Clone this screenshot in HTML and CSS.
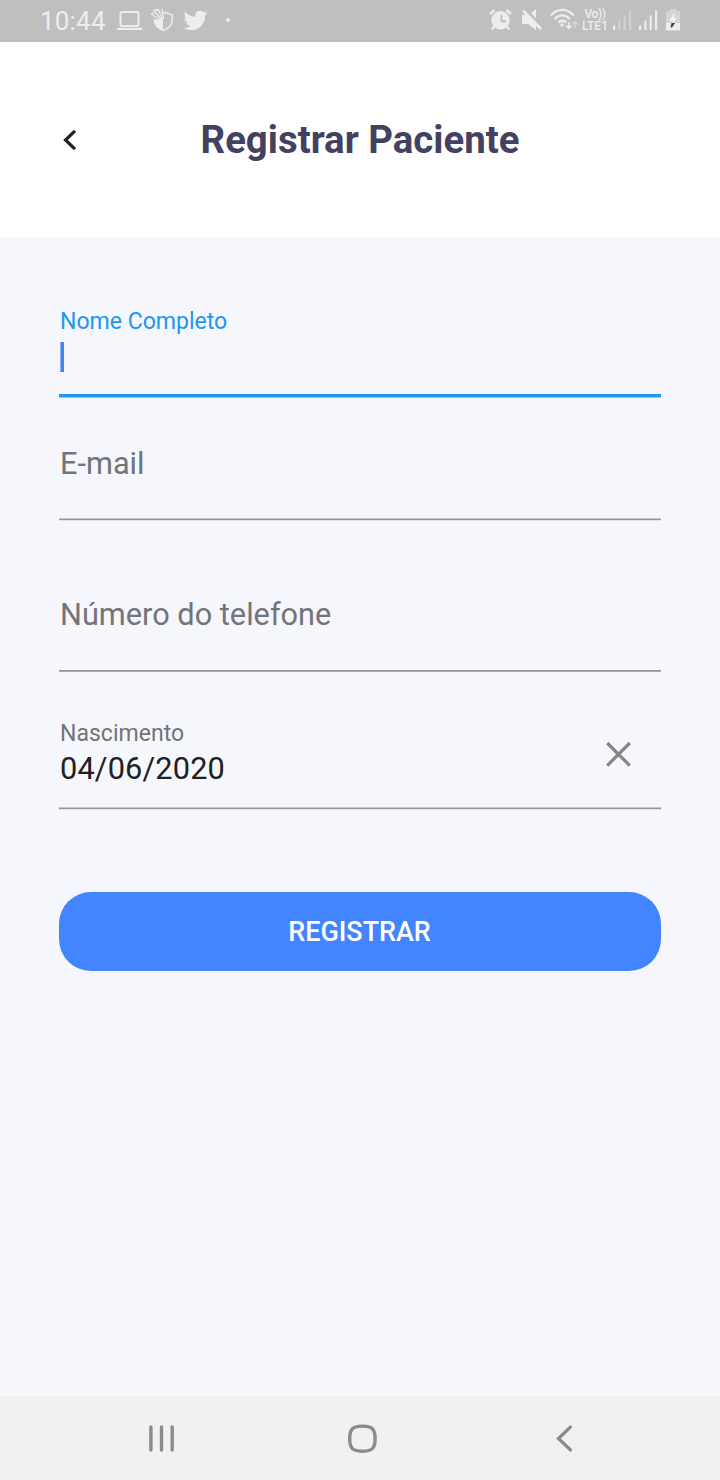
FILE: index.html
```
<!DOCTYPE html>
<html lang="pt-BR">
<head>
<meta charset="utf-8">
<title>Registrar Paciente</title>
<link rel="stylesheet" href="styles.css">
</head>
<body>
<div class="screen">
  <div class="status">
    <span class="clock">10:44</span>
    <svg class="status-left" width="122" height="42" viewBox="112 0 122 42" fill="none" stroke="#ededed">
      <rect x="120.500" y="12" width="18" height="14" rx="1.500" stroke-width="2"/>
      <path d="M117 28.900h25" stroke-width="2.200"/>
      <path d="M163 13l2-.5 7.300 2.500v5c0 5-4 8.500-9 10.500-5-2-9-5.500-9-10.500v-1" stroke-width="1.500"/>
      <path d="M163 19v11c-5-2-8-5.500-8.500-10z" fill="#ededed" stroke="none"/>
      <path d="M151 14l9 6M153.500 10.500l8 9M158.500 9.500l4 10M162 9l1.500 10M151 14l3-1M153.500 10.500l5-1" stroke-width="1.300"/>
      <path transform="translate(183.500 8.500)" fill="#ededed" stroke="none" d="M23.953 4.570a10 10 0 01-2.825.775 4.958 4.958 0 002.163-2.723c-.951.555-2.005.959-3.127 1.184a4.920 4.920 0 00-8.384 4.482C7.690 8.095 4.067 6.130 1.640 3.162a4.822 4.822 0 00-.666 2.475c0 1.710.870 3.213 2.188 4.096a4.904 4.904 0 01-2.228-.616v.060a4.923 4.923 0 003.946 4.827 4.996 4.996 0 01-2.212.085 4.936 4.936 0 004.604 3.417 9.867 9.867 0 01-6.102 2.105c-.390 0-.779-.023-1.170-.067a13.995 13.995 0 007.557 2.209c9.053 0 13.998-7.496 13.998-13.985 0-.210 0-.420-.015-.630A9.935 9.935 0 0024 4.590z"/>
      <circle cx="228" cy="20" r="2" fill="#ededed" stroke="none"/>
    </svg>
    <svg class="status-right" width="92" height="42" viewBox="488 0 92 42" fill="none" stroke="#ededed">
      <circle cx="500.500" cy="20.200" r="9.200" fill="#ededed" stroke="none"/>
      <path d="M490 14l4.500-4M511 14l-4.500-4M494.500 26.500l-3 3M506.500 26.500l3 3" stroke-width="2.400"/>
      <path d="M501.500 15v6.200h4.500" stroke="#bfbfbf" stroke-width="2"/>
      <path d="M522 15h7l7-6v21.500l-7.500-6.500H522z" fill="#ededed" stroke="none"/>
      <path d="M524.500 8.500l17 17.500" stroke="#bfbfbf" stroke-width="3"/>
      <path d="M523 10.500l18 18.500" stroke-width="2.600"/>
      <path d="M550.800 15.500c6.500-7.500 16.500-7.500 23 0M554.500 19.200c5-5 10.500-5 15.500 0M558.300 22.500c3-2.500 5.500-2.500 8 0" stroke-width="2.300"/>
      <circle cx="562" cy="25" r="1.800" fill="#ededed" stroke="none"/>
      <path d="M569 22v6M566.300 25.500l2.700 3 2.700-3" stroke-width="1.600"/>
      <path d="M575 28v-6M572.300 24.500l2.700-3 2.700 3" stroke="#d6d6d6" stroke-width="1.600"/>
    </svg>
    <div class="carrier"><span class="volte">Vo))</span><span>LTE1</span></div>
    <svg width="74" height="42" viewBox="610 0 74 42">
      <path d="M613 25.500h2.200v4.500h-2.200z" fill="#ededed"/>
      <path d="M618.300 20.500h2.200V30h-2.200zM623.600 15.500h2.200V30h-2.200zM629 10.500h2.200V30H629z" fill="#d2d2d2"/>
      <path d="M639 25.500h2.200V30H639zM644.300 20.500h2.200V30h-2.200zM649.600 15.500h2.200V30h-2.200zM655 10.500h2.200V30H655z" fill="#ededed"/>
      <path d="M666 11h3.500V9h7v2h3.500v12h-14z" fill="#d4d4d4"/>
      <path d="M666 23h14v7.500h-14z" fill="#ededed"/>
      <path d="M674.500 13l-5.500 7.500h4l-1 3.500 5.500-6h-3.500z" fill="#f4f4f4"/>
      <path d="M671.500 23h3.500l-3 4.500h-1.500z" fill="#404040"/>
    </svg>
  </div>
  <header class="header">
    <svg class="back" width="20" height="26" viewBox="60 127 20 26"><path d="M75 130.800l-9.500 9.200 9.500 9.200" fill="none" stroke="#212121" stroke-width="3.200"/></svg>
    <h1>Registrar Paciente</h1>
  </header>
  <main class="form">
    <div class="field name">
      <label>Nome Completo</label>
      <div class="caret"></div>
      <div class="rule active"></div>
    </div>
    <div class="field email"><span class="hint">E-mail</span><div class="rule"></div></div>
    <div class="field phone"><span class="hint">Número do telefone</span><div class="rule even"></div></div>
    <div class="field birth">
      <div class="birth-row">
        <div class="birth-text"><label>Nascimento</label><span class="value">04/06/2020</span></div>
        <svg class="clear" width="28" height="28" viewBox="0 0 28 28"><path d="M3.200 3l22.600 22.600M25.800 3L3.200 25.600" stroke="#858689" stroke-width="3.200"/></svg>
      </div>
      <div class="rule"></div>
    </div>
    <button class="submit">REGISTRAR</button>
  </main>
  <nav class="nav">
    <svg width="720" height="84" viewBox="0 1396 720 84" fill="none" stroke="#8b8b8b" stroke-width="3.400" stroke-linecap="round">
      <path d="M150.900 1427v23M161.500 1427v23M172.200 1427v23"/>
      <path d="M362.400 1426.100c9.700 0 12.700 3 12.700 12.700s-3 12.400-12.700 12.400-12.700-2.700-12.700-12.400 3-12.700 12.700-12.700z"/>
      <path d="M570.500 1427l-12 11.500 12 11.500" stroke-width="3.200"/>
    </svg>
  </nav>
</div>
</body>
</html>
```
FILE: styles.css
```
body {
  margin: 0;
  font-family: Roboto, "Noto Sans", sans-serif;
}
.screen {
  display: flex;
  flex-direction: column;
  width: 720px;
  height: 1480px;
  overflow: hidden;
  background: #f5f7fc;
}
svg {
  display: block;
  flex: none;
}
.status {
  display: flex;
  height: 42px;
  background: #bfbfbf;
  color: #ededed;
}
.clock {
  width: 72px;
  padding-left: 40px;
  font-size: 26px;
  line-height: 42px;
  letter-spacing: 0.2px;
}
.status-right {
  margin-left: 254px;
}
.carrier {
  display: flex;
  flex-direction: column;
  align-items: center;
  width: 30px;
  padding-top: 8px;
  font-size: 12px;
  font-weight: 500;
  line-height: 12px;
}
.volte {
  letter-spacing: -0.4px;
}
.header {
  display: flex;
  align-items: center;
  height: 195px;
  background: #fff;
}
.back {
  margin-left: 60px;
}
h1 {
  width: 560px;
  margin: 0;
  color: #434160;
  font-size: 38.4px;
  font-weight: 700;
  line-height: 44px;
  text-align: center;
}
.form {
  flex: 1;
  padding: 0 59px;
}
.field {
  display: flex;
  flex-direction: column;
  box-sizing: border-box;
}
label {
  color: #737478;
  font-size: 23.04px;
  line-height: 26px;
  padding-left: 1px;
}
.name {
  height: 161px;
  padding-top: 72px;
}
.name label {
  color: #2196f3;
}
.caret {
  width: 4px;
  height: 30px;
  margin: 7px 0 0 1px;
  background: linear-gradient(90deg, #8fb2f8 1px, #4285f4 1px);
}
.rule {
  height: 3px;
  margin: auto 0 0;
  background: linear-gradient(#c4c6ca 1px, #94959a 1px, #94959a 2px, #e3e5ea 2px);
}
.rule.even {
  height: 2px;
  background: linear-gradient(#949599 1px, #a8a9ad 1px);
}
.rule.active {
  height: 4px;
  background: linear-gradient(#2196f3 3px, #90c8f8 3px);
}
.hint,
.value {
  padding-left: 1px;
  font-size: 30.72px;
  line-height: 36px;
}
.hint {
  color: #737478;
}
.email {
  height: 123px;
  padding-top: 48px;
}
.phone {
  height: 151px;
  padding-top: 76px;
}
.birth {
  height: 138px;
  padding-top: 49px;
}
.birth-row {
  display: flex;
  justify-content: space-between;
  align-items: center;
  padding-right: 29px;
}
.birth-text {
  display: flex;
  flex-direction: column;
}
.clear {
  margin-bottom: 1px;
}
.value {
  margin-top: 4px;
  color: #212121;
  letter-spacing: 0.15px;
}
.submit {
  display: block;
  width: 602px;
  height: 79px;
  margin-top: 82px;
  padding: 1px 1px 0 0;
  border: 0;
  border-radius: 32px;
  background: #4285ff;
  color: #fff;
  font-family: inherit;
  font-size: 26.9px;
  font-weight: 500;
}
.nav {
  height: 84px;
  background: #f1f1f1;
}
```
